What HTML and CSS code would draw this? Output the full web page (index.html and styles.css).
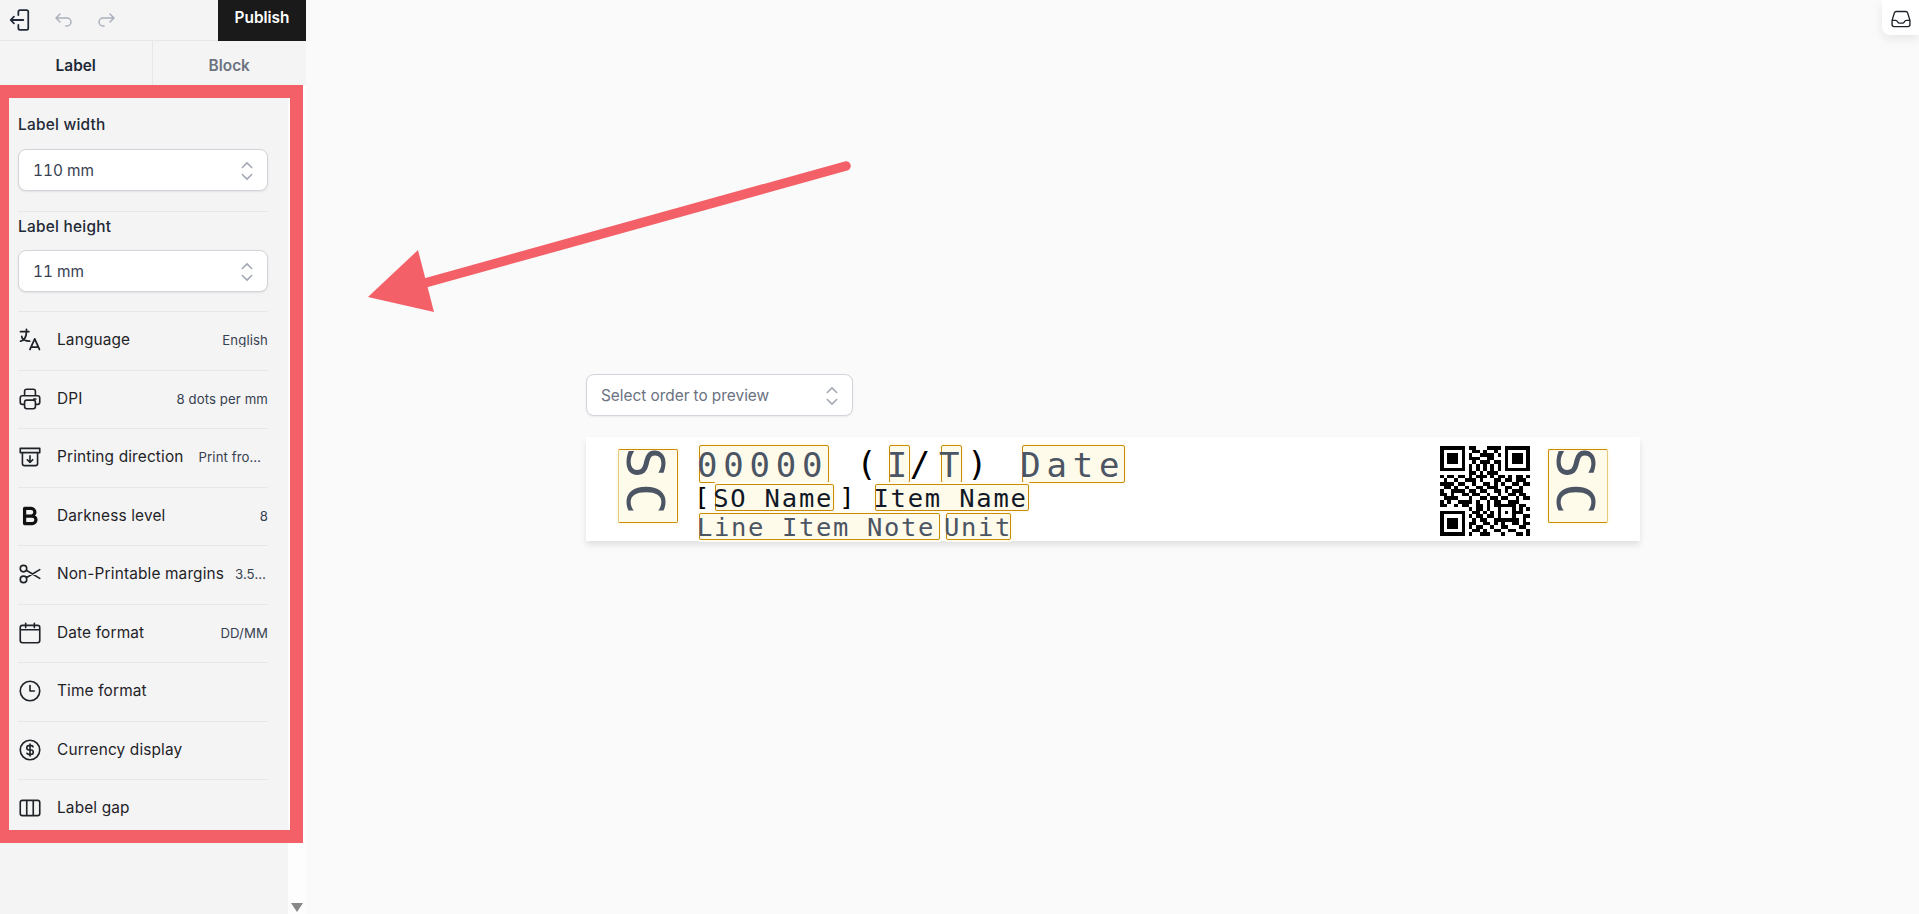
FILE: index.html
```html
<!DOCTYPE html>
<html lang="en">
<head>
<meta charset="utf-8">
<title>Label editor</title>
<link rel="stylesheet" href="styles.css">
</head>
<body>
<div class="app">
  <aside class="sidebar">
    <header class="topbar">
      <div class="history">
        <svg class="ic exit" viewBox="0 0 20 20"><path d="M8.500 5.500V2.500a1.500 1.500 0 0 1 1.500-1.500h6a1.500 1.500 0 0 1 1.500 1.500v15a1.500 1.500 0 0 1-1.500 1.500h-6a1.500 1.500 0 0 1-1.500-1.500v-3M13 10H1.500M4.500 7l-3 3 3 3"/></svg>
        <svg class="ic muted" viewBox="0 0 24 24"><path d="M9 14l-4-4 4-4M5 10h11a4 4 0 1 1 0 8h-1"/></svg>
        <svg class="ic muted" viewBox="0 0 24 24"><path d="M15 14l4-4-4-4M19 10H8a4 4 0 1 0 0 8h1"/></svg>
      </div>
      <button class="publish">Publish</button>
    </header>
    <nav class="tabs">
      <div class="tab active">Label</div>
      <div class="tab">Block</div>
    </nav>
    <div class="scroller">
      <div class="panel">
        <div class="field">
          <div class="field-title">Label width</div>
          <div class="select"><span>110 mm</span><svg class="chev" viewBox="0 0 24 24"><path d="M8 9l4-4 4 4M16 15l-4 4-4-4"/></svg></div>
        </div>
        <div class="field second">
          <div class="field-title">Label height</div>
          <div class="select"><span>11 mm</span><svg class="chev" viewBox="0 0 24 24"><path d="M8 9l4-4 4 4M16 15l-4 4-4-4"/></svg></div>
        </div>
        <div class="row"><svg class="ic" viewBox="1 1 22 22"><path d="M4 5h7M9 3v2c0 4.418-2.239 8-5 8M5 9c0 2.144 2.952 3.908 6.700 4M12 20l4-9 4 9M19.100 18h-6.200"/></svg><span class="row-label">Language</span><span class="row-value">English</span></div>
        <div class="row"><svg class="ic" viewBox="0 0 24 24"><path d="M17 17h2a2 2 0 0 0 2-2v-4a2 2 0 0 0-2-2H5a2 2 0 0 0-2 2v4a2 2 0 0 0 2 2h2M17 9V5a2 2 0 0 0-2-2H9a2 2 0 0 0-2 2v4M9 13h6a2 2 0 0 1 2 2v4a2 2 0 0 1-2 2H9a2 2 0 0 1-2-2v-4a2 2 0 0 1 2-2zM15.500 12h2"/></svg><span class="row-label">DPI</span><span class="row-value">8 dots per mm</span></div>
        <div class="row"><svg class="ic" viewBox="0 0 24 24"><path d="M3 4h18v4H3zM5 8v10a2 2 0 0 0 2 2h10a2 2 0 0 0 2-2V8M12 11v6M9.500 14.500 12 17l2.500-2.500"/></svg><span class="row-label">Printing direction</span><span class="row-value">Print from top</span></div>
        <div class="row"><svg class="ic heavy" viewBox="0 0 24 24"><path d="M7 5h6a3.500 3.500 0 0 1 0 7H7zM13 12h1a3.500 3.500 0 0 1 0 7H7v-7"/></svg><span class="row-label">Darkness level</span><span class="row-value">8</span></div>
        <div class="row"><svg class="ic" viewBox="0 0 24 24"><path d="M3 7a3 3 0 1 0 6 0 3 3 0 1 0-6 0M3 17a3 3 0 1 0 6 0 3 3 0 1 0-6 0M8.600 8.600 21 16M8.600 15.400 21 8"/></svg><span class="row-label">Non-Printable margins</span><span class="row-value tight">3.5 mm</span></div>
        <div class="row"><svg class="ic" viewBox="0 0 24 24"><path d="M5 5h14a2 2 0 0 1 2 2v12a2 2 0 0 1-2 2H5a2 2 0 0 1-2-2V7a2 2 0 0 1 2-2zM16 3v4M8 3v4M3 9h18"/></svg><span class="row-label">Date format</span><span class="row-value">DD/MM</span></div>
        <div class="row"><svg class="ic" viewBox="0 0 24 24"><circle cx="12" cy="12" r="9"/><path d="M12 7v5h4"/></svg><span class="row-label">Time format</span></div>
        <div class="row"><svg class="ic" viewBox="0 0 24 24"><circle cx="12" cy="12" r="9"/><path d="M14.800 9A2 2 0 0 0 13 8h-2a2 2 0 0 0 0 4h2a2 2 0 0 1 0 4h-2a2 2 0 0 1-1.800-1M12 6.500v11"/></svg><span class="row-label">Currency display</span></div>
        <div class="row"><svg class="ic" viewBox="0 0 24 24"><path d="M5 5h14a2 2 0 0 1 2 2v10a2 2 0 0 1-2 2H5a2 2 0 0 1-2-2V7a2 2 0 0 1 2-2zM9 5v14M15 5v14"/></svg><span class="row-label">Label gap</span></div>
      </div>
      <div class="scrollbar"><span class="scroll-down"></span></div>
    </div>
  </aside>

  <main class="canvas">
    <div class="select preview"><span>Select order to preview</span><svg class="chev" viewBox="0 0 24 24"><path d="M8 9l4-4 4 4M16 15l-4 4-4-4"/></svg></div>
    <section class="label">
      <div class="tag sc sc-left">SC</div>
      <div class="lines">
        <div class="line line1">
          <span class="tag">00000</span><span class="ch gap1">(</span><span class="tag narrow gap2">I</span><span class="ch">/</span><span class="tag narrow gap3">T</span><span class="ch close">)</span><span class="tag date">Date</span>
        </div>
        <div class="line line2">
          <span class="ch open">[</span><span class="tag">SO Name</span><span class="ch bracket">]</span><span class="tag item">Item Name</span>
        </div>
        <div class="line line3">
          <span class="tag note">Line Item Note</span><span class="tag unit">Unit</span>
        </div>
      </div>
      <svg class="qr" viewBox="0 0 25 25"><path d="M0 .5h7M8 .5h2M13 .5h4M18 .5h7M0 1.500h1M6 1.500h1M9 1.500h2M12 1.500h1M15 1.500h1M18 1.500h1M24 1.500h1M0 2.500h1M2 2.500h3M6 2.500h1M8 2.500h1M11 2.500h4M16 2.500h1M18 2.500h1M20 2.500h3M24 2.500h1M0 3.500h1M2 3.500h3M6 3.500h1M8 3.500h3M13 3.500h2M18 3.500h1M20 3.500h3M24 3.500h1M0 4.500h1M2 4.500h3M6 4.500h1M9 4.500h1M11 4.500h3M15 4.500h2M18 4.500h1M20 4.500h3M24 4.500h1M0 5.500h1M6 5.500h1M8 5.500h1M10 5.500h1M12 5.500h1M14 5.500h1M16 5.500h1M18 5.500h1M24 5.500h1M0 6.500h7M8 6.500h1M10 6.500h1M12 6.500h1M14 6.500h1M16 6.500h1M18 6.500h7M8 7.500h2M11 7.500h1M13 7.500h3M0 8.500h1M2 8.500h2M5 8.500h2M8 8.500h1M10 8.500h3M14 8.500h1M16 8.500h2M19 8.500h1M21 8.500h2M24 8.500h1M1 9.500h1M4 9.500h1M7 9.500h3M11 9.500h1M15 9.500h2M18 9.500h2M21 9.500h3M0 10.500h4M5 10.500h2M9 10.500h1M12 10.500h2M15 10.500h1M17 10.500h1M20 10.500h2M23 10.500h2M1 11.500h2M4 11.500h1M7 11.500h1M10 11.500h2M13 11.500h3M18 11.500h2M22 11.500h1M0 12.500h1M3 12.500h4M8 12.500h2M11 12.500h2M15 12.500h2M18 12.500h1M20 12.500h3M0 13.500h2M3 13.500h1M6 13.500h2M9 13.500h2M13 13.500h1M16 13.500h1M19 13.500h2M22 13.500h2M1 14.500h4M8 14.500h1M11 14.500h2M14 14.500h2M17 14.500h2M21 14.500h1M23 14.500h2M0 15.500h1M2 15.500h1M5 15.500h4M10 15.500h1M13 15.500h1M15 15.500h2M19 15.500h3M0 16.500h2M4 16.500h1M6 16.500h2M10 16.500h2M13 16.500h1M15 16.500h6M22 16.500h2M8 17.500h1M10 17.500h2M13 17.500h1M16 17.500h1M20 17.500h1M22 17.500h1M24 17.500h1M0 18.500h7M9 18.500h2M12 18.500h1M14 18.500h1M16 18.500h1M18 18.500h1M20 18.500h3M0 19.500h1M6 19.500h1M8 19.500h1M10 19.500h2M13 19.500h2M16 19.500h1M20 19.500h1M23 19.500h2M0 20.500h1M2 20.500h3M6 20.500h1M9 20.500h1M11 20.500h2M15 20.500h7M23 20.500h1M0 21.500h1M2 21.500h3M6 21.500h1M8 21.500h2M12 21.500h2M15 21.500h1M17 21.500h1M20 21.500h2M23 21.500h2M0 22.500h1M2 22.500h3M6 22.500h1M8 22.500h1M10 22.500h2M14 22.500h1M17 22.500h2M22 22.500h2M0 23.500h1M6 23.500h1M9 23.500h2M12 23.500h1M15 23.500h2M19 23.500h2M24 23.500h1M0 24.500h7M8 24.500h1M11 24.500h3M17 24.500h1M21 24.500h2M24 24.500h1"/></svg>
      <div class="tag sc sc-right">SC</div>
    </section>
  </main>
</div>

<div class="annotation-box"></div>
<svg class="annotation-arrow" viewBox="0 0 1919 914"><path class="shaft" d="M846 166 425 283"/><path class="head" d="M368 297 418 250 434 312z"/></svg>
<div class="inbox"><svg class="ic inbox-ic" viewBox="0 0 24 24"><path d="M2.250 13.500h3.860a2.250 2.250 0 0 1 2.012 1.244l.256.512a2.250 2.250 0 0 0 2.013 1.244h3.218a2.250 2.250 0 0 0 2.013-1.244l.256-.512a2.250 2.250 0 0 1 2.013-1.244h3.859m-19.500.338V18a2.250 2.250 0 0 0 2.250 2.250h15A2.250 2.250 0 0 0 21.750 18v-4.162c0-.224-.034-.447-.1-.661L19.240 5.338a2.250 2.250 0 0 0-2.150-1.588H6.911a2.250 2.250 0 0 0-2.150 1.588L2.350 13.177a2.250 2.250 0 0 0-.1.661Z"/></svg></div>
</body>
</html>
```
FILE: styles.css
```css
* { box-sizing: border-box; }
html, body { margin: 0; height: 100%; overflow: hidden; }
body { background: #fafafa; font-family: Inter, "Liberation Sans", sans-serif; color: #1f2937; }

.app { display: flex; height: 914px; }

/* Sidebar */
.sidebar { width: 306px; flex: none; display: flex; flex-direction: column; background: #f4f4f4; }
.topbar { height: 41px; flex: none; display: flex; justify-content: space-between; border-bottom: 1px solid #e5e7eb; }
.history { display: flex; align-items: center; padding-left: 9px; height: 40px; }
.publish { width: 88px; height: 41px; border: 0; background: #1a1a1a; color: #fff; font: 600 15.400px/28px Inter, sans-serif; padding: 0 0 6px; }
.ic { width: 26px; height: 26px; flex: none; fill: none; stroke: #1f2328; stroke-width: 1.500; stroke-linecap: round; stroke-linejoin: round; }
.exit { width: 22px; height: 22px; stroke: #1f2937; stroke-width: 1.600; margin-right: 20px; }
.muted { stroke: #aab0bb; width: 24px; height: 24px; margin-right: 20px; }
.heavy { stroke-width: 3; stroke: #111; }

.tabs { height: 44px; flex: none; display: flex; }
.tab { width: 154px; display: flex; align-items: center; justify-content: center; font-size: 15.400px; font-weight: 600; color: #6b7280; padding-top: 5px; }
.tab.active { width: 153px; color: #1f2937; border-right: 1px solid #e5e7eb; }

.scroller { flex: 1; display: flex; min-height: 0; }
.panel { width: 288px; background: #f4f4f4; padding: 30px 20px 0 18px; }
.scrollbar { flex: 1; background: #fdfdfd; position: relative; }
.scroll-down { position: absolute; left: 3px; bottom: 2px; border: 6px solid transparent; border-top: 9px solid #888; border-bottom: 0; }

.field-title { height: 20px; font-size: 15.400px; font-weight: 500; line-height: 20px; letter-spacing: .25px; color: #1f2937; }
.field.second { margin-top: 20px; border-top: 1px solid #e5e7eb; padding-top: 5px; }
.select { height: 42px; margin-top: 14px; display: flex; align-items: center; justify-content: space-between; background: #fff; border: 1px solid #d1d5db; border-radius: 8px; padding: 1px 14px 0; font-size: 15.400px; font-variant-numeric: tabular-nums; color: #374151; box-shadow: 0 1px 2px rgba(0, 0, 0, .08); }
.field.second .select { margin-top: 13px; height: 42px; }
.chev { width: 28px; height: 28px; flex: none; fill: none; stroke: #a4aab5; stroke-width: 1.400; stroke-linecap: round; stroke-linejoin: round; margin-right: -8px; }

.row { height: 58.500px; display: flex; align-items: center; border-top: 1px solid #e5e7eb; padding: 0 0 1px; }
.field.second + .row { margin-top: 19px; }
.row .ic { margin-left: -1px; }
.row-label { margin-left: 14px; font-size: 15.400px; line-height: 20px; letter-spacing: .15px; color: #1f2328; white-space: nowrap; flex: none; }
.row-value { flex: 1; min-width: 0; margin-left: 15px; font-size: 13.200px; line-height: 14px; letter-spacing: .1px; color: #374151; text-align: right; white-space: nowrap; overflow: hidden; text-overflow: ellipsis; }
.row-value.tight { margin-left: 11px; letter-spacing: 0; }

/* Canvas */
.canvas { flex: 1; padding: 374px 0 0 280px; }
.select.preview { width: 267px; height: 42px; margin: 0; color: #6b7280; }
.label { width: 1054px; height: 104px; margin-top: 21px; background: #fff; box-shadow: 0 4px 6px rgba(0, 0, 0, .1); display: flex; align-items: flex-start; padding: 0 32px; font-family: "DejaVu Sans Mono", monospace; color: #000; }

.tag { display: inline-block; flex: none; background: #fffbeb; border: 1px solid #ca8a04; border-radius: 2px; box-shadow: 0 0 0 2px #fffdf2; color: #4b5563; white-space: pre; text-indent: -3px; }
.sc { width: 60px; height: 74px; margin-top: 12px; padding-right: 8px; font-size: 52px; line-height: 48px; letter-spacing: 5px; writing-mode: vertical-rl; text-align: left; text-indent: -3px; overflow: hidden; }
.sc-left { border-left-color: #e8c878; }
.sc-right { border-right-color: #e8c878; }
.lines { margin: 8px 0 0 21px; flex: 1; }
.line { display: flex; white-space: pre; }
.line1 { height: 38px; font-size: 34px; letter-spacing: 5.800px; line-height: 38px; }
.line2 { height: 27px; margin-top: 1px; font-size: 25.500px; letter-spacing: 1.800px; line-height: 26px; }
.line3 { height: 27px; margin-top: 2px; font-size: 25.500px; letter-spacing: 1.650px; line-height: 26px; }
.line2 .tag { color: #111827; }
.ch { flex: none; }
.open { margin: 0 4px 0 -5px; }
.gap1 { margin-left: 27px; }
.gap2 { margin-left: 6px; }
.gap3 { margin-left: 5px; }
.narrow { width: 21px; }
.close { margin-left: 5px; }
.date { width: 103px; margin-left: 29px; }
.bracket { margin-left: 5px; }
.item { width: 154px; margin-left: 19px; }
.note { width: 241px; }
.unit { width: 65px; margin-left: 6px; }
.qr { width: 90px; height: 90px; margin: 9px 18px 0 0; flex: none; fill: none; stroke: #000; stroke-width: 1; shape-rendering: crispEdges; }

/* Overlays */
.annotation-box { position: absolute; left: 0; top: 85px; width: 303px; height: 758px; border: 13px solid #f36067; border-left-width: 9px; }
.annotation-arrow { position: absolute; left: 0; top: 0; width: 1919px; height: 914px; pointer-events: none; }
.shaft { fill: none; stroke: #f36067; stroke-width: 9.500px; stroke-linecap: round; }
.head { fill: #f36067; }
.inbox { position: absolute; right: 0; top: 0; width: 37px; height: 35px; background: #fff; border-bottom-left-radius: 8px; box-shadow: 0 4px 10px rgba(0, 0, 0, .08); display: flex; align-items: center; justify-content: center; padding-top: 2px; }
.inbox-ic { width: 22px; height: 22px; stroke-width: 1.500; }
```
